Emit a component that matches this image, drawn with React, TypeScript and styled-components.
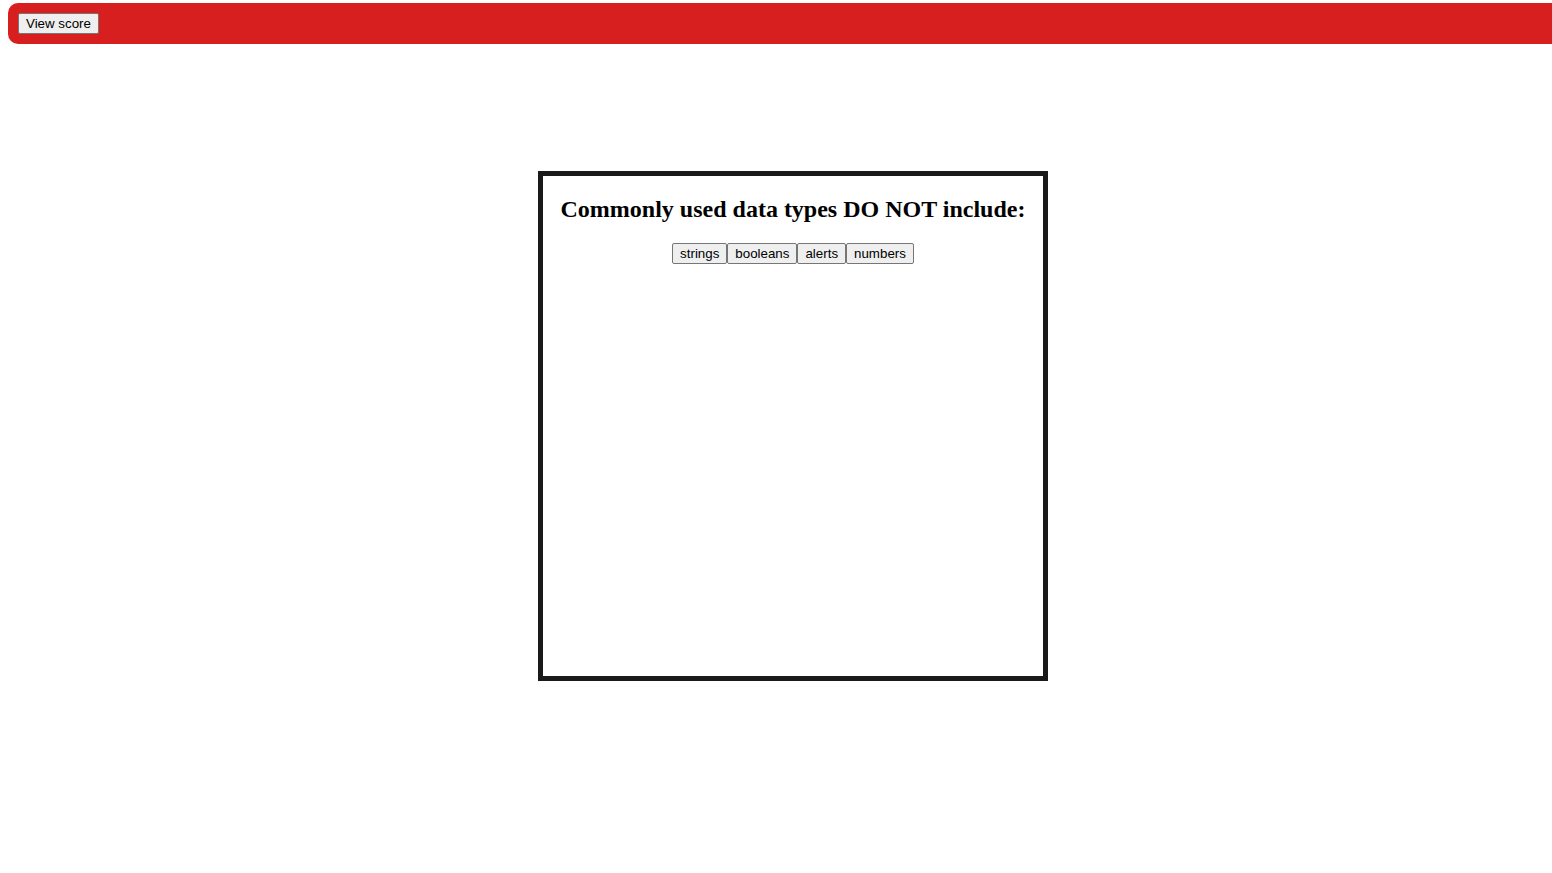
import React from "react";
import styled, { createGlobalStyle } from "styled-components";

const Global = createGlobalStyle`
  html, body { overflow-x: hidden; }
  body {
    margin: 3px 0 0 8px;
    background: #ffffff;
    font-family: "Liberation Serif", "Times New Roman", serif;
  }
`;

const Page = styled.div`
  width: 1570px;
  display: flex;
  flex-direction: column;
`;

const Header = styled.header`
  background: #d71f1f;
  padding: 10px;
  border-radius: 10px 0 0 10px;
  display: flex;
  align-items: center;
`;

const Button = styled.button`
  font-family: "Liberation Sans", Arial, sans-serif;
  font-size: 13.333px;
  line-height: normal;
  color: #000;
  background: #efefef;
  border: 1px solid #767676;
  border-radius: 2px;
  padding: 2px 7px;
  margin: 0;
  cursor: default;
`;

const Card = styled.main`
  align-self: center;
  margin-top: 127px;
  width: 500px;
  height: 500px;
  border: 5px solid #1a1a1a;
  display: flex;
  flex-direction: column;
  align-items: center;
`;

const Question = styled.h2`
  margin: 20px 0;
  font-size: 24px;
  font-weight: bold;
  color: #000;
  text-align: center;
`;

const Choices = styled.div`
  display: flex;
  justify-content: center;
`;

const answers = ["strings", "booleans", "alerts", "numbers"];

export default function App() {
  return (
    <>
      <Global />
      <Page>
        <Header>
          <Button>View score</Button>
        </Header>
        <Card>
          <Question>Commonly used data types DO NOT include:</Question>
          <Choices>
            {answers.map((a) => (
              <Button key={a}>{a}</Button>
            ))}
          </Choices>
        </Card>
      </Page>
    </>
  );
}
